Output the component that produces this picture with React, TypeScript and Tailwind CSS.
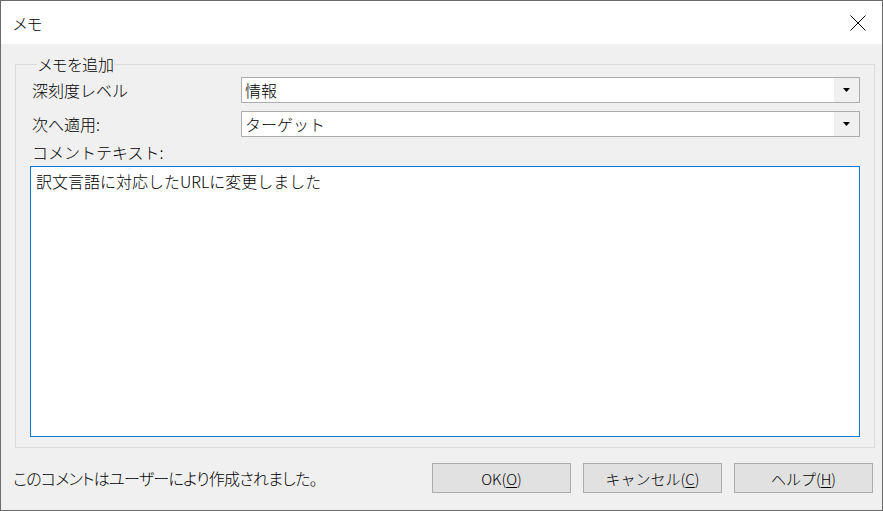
import React from "react";

const font = "font-['Noto_Sans_CJK_JP','Noto_Sans',sans-serif]";

function Combo({ value }: { value: string }) {
  return (
    <div className="flex h-[26px] w-[619px] border border-[#adadad] bg-white">
      <div className="flex flex-1 items-center pl-[3px] text-[16px] leading-none text-black">{value}</div>
      <div className="flex w-[25px] items-center justify-center bg-[#f0f0f0]">
        <svg width="7" height="4" viewBox="0 0 7 4">
          <path d="M0 0h7L3.5 4z" fill="#000" />
        </svg>
      </div>
    </div>
  );
}

function Btn({ label, k }: { label: string; k: string }) {
  return (
    <button className="flex h-[30px] w-[139px] items-center justify-center border border-[#adadad] bg-[#e1e1e1] text-[15px] font-light leading-none text-black">
      {label}(<span className="underline underline-offset-2">{k}</span>)
    </button>
  );
}

export default function App() {
  return (
    <div className={`${font} flex h-[511px] w-[883px] flex-col border border-[#6b6b6b] bg-[#f0f0f0] font-light text-black`}>
      <div className="flex h-[43px] items-center justify-between bg-white pl-[12px] pr-[16px]">
        <span className="text-[16px] [font-feature-settings:'palt']">メモ</span>
        <svg width="16" height="16" viewBox="0 0 16 16">
          <path d="M0.5 0.5L15.5 15.5M15.5 0.5L0.5 15.5" stroke="#000" strokeWidth="1" />
        </svg>
      </div>
      <fieldset className="ml-[14px] mr-[7px] mt-[10px] border border-[#dcdcdc] px-[14px] pb-[10px]">
        <legend className="ml-[7px] px-[1px] text-[16px] leading-[20px] [font-feature-settings:'palt']">メモを追加</legend>
        <div className="flex flex-col gap-[8px] pt-[3px]">
          <div className="flex items-center">
            <span className="w-[211px] pl-[2px] text-[16px]">深刻度レベル</span>
            <Combo value="情報" />
          </div>
          <div className="flex items-center">
            <span className="w-[211px] pl-[2px] text-[16px]">次へ適用:</span>
            <Combo value="ターゲット" />
          </div>
        </div>
        <div className="mt-[2px] pl-[2px] text-[16px] leading-[27px]">コメントテキスト:</div>
        <div className="h-[271px] w-[830px] border border-[#0078d7] bg-white px-[5px] pt-[3px] text-[16px] leading-[22px]">
          訳文言語に対応したURLに変更しました
        </div>
      </fieldset>
      <div className="mt-[15px] flex items-center pl-[12px] pr-[9px]">
        <span className="flex-1 text-[16px] tracking-[-0.7px] [font-feature-settings:'palt']">このコメントはユーザーにより作成されました。</span>
        <div className="flex gap-[12px]">
          <Btn label="OK" k="O" />
          <Btn label="キャンセル" k="C" />
          <Btn label="ヘルプ" k="H" />
        </div>
      </div>
    </div>
  );
}
